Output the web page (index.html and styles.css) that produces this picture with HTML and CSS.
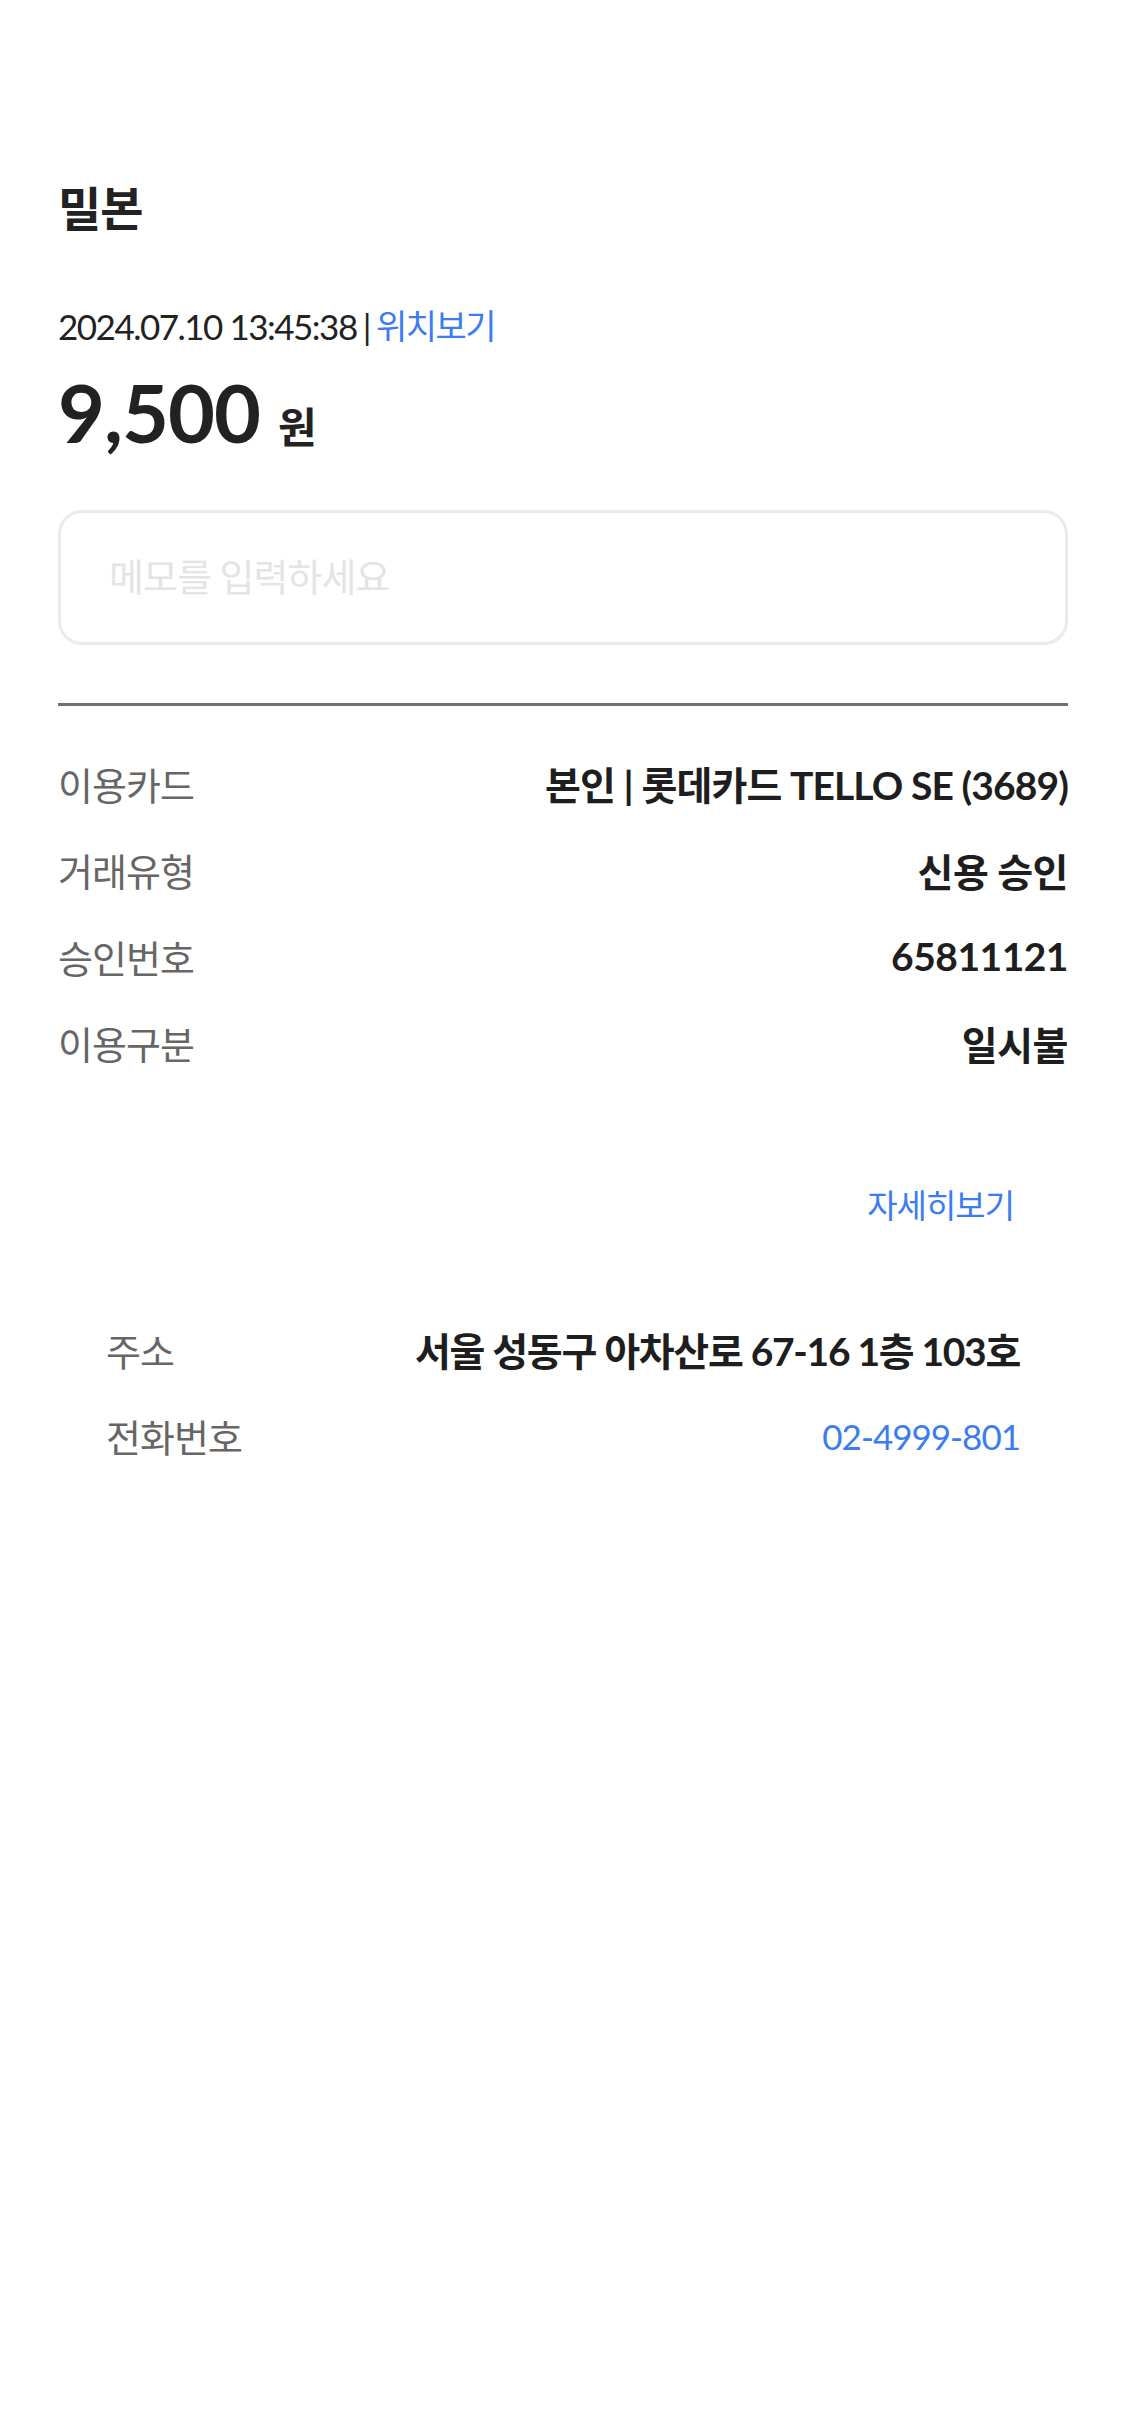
FILE: index.html
```html
<!DOCTYPE html>
<html lang="ko">
<head>
<meta charset="utf-8">
<title>밀본</title>
<link rel="stylesheet" href="styles.css">
</head>
<body>
<main class="page">
  <h1 class="title">밀본</h1>
  <div class="meta">
    <span class="datetime">2024.07.10 13:45:38</span>
    <span class="sep">|</span>
    <a class="link" href="#">위치보기</a>
  </div>
  <div class="amount">
    <span class="amount-num">9,500</span>
    <span class="amount-unit">원</span>
  </div>
  <div class="memo">
    <span class="memo-placeholder">메모를 입력하세요</span>
  </div>
  <hr class="divider">
  <dl class="info">
    <div class="row"><dt>이용카드</dt><dd class="card">본인 | 롯데카드 TELLO SE (3689)</dd></div>
    <div class="row"><dt>거래유형</dt><dd>신용 승인</dd></div>
    <div class="row"><dt>승인번호</dt><dd>65811121</dd></div>
    <div class="row"><dt>이용구분</dt><dd>일시불</dd></div>
  </dl>
  <div class="more-wrap">
    <a class="more" href="#">자세히보기</a>
  </div>
  <dl class="store">
    <div class="row"><dt>주소</dt><dd class="address">서울 성동구 아차산로 67-16 1층 103호</dd></div>
    <div class="row"><dt>전화번호</dt><dd class="phone">02-4999-801</dd></div>
  </dl>
</main>
</body>
</html>
```

FILE: styles.css
```css
* { box-sizing: border-box; }
html, body {
  margin: 0;
  padding: 0;
  background: #ffffff;
}
body {
  font-family: Lato, "Noto Sans CJK KR", sans-serif;
  color: #222222;
  width: 1125px;
  min-height: 2436px;
}
.page {
  padding: 180px 57px 0 58px;
}
.title {
  margin: 0;
  font-size: 47px;
  line-height: 56px;
  font-weight: 700;
  color: #222222;
  letter-spacing: -1px;
}
.meta {
  margin-top: 68px;
  display: flex;
  align-items: center;
  gap: 6px;
  font-size: 35px;
  line-height: 44px;
  letter-spacing: -1.5px;
}
.datetime { color: #222222; }
.sep { color: #222222; }
.link {
  color: #3b7cf0;
  text-decoration: none;
  font-size: 34px;
  letter-spacing: -1.5px;
}
.amount {
  margin-top: 16px;
  display: flex;
  align-items: baseline;
  gap: 18px;
  height: 96px;
}
.amount-num {
  font-size: 81px;
  line-height: 96px;
  font-weight: 700;
  color: #222222;
  letter-spacing: -1px;
}
.amount-unit {
  font-size: 42px;
  font-weight: 700;
  color: #222222;
}
.memo {
  margin-top: 50px;
  height: 135px;
  border: 3px solid #ebebeb;
  border-radius: 24px;
  display: flex;
  align-items: center;
  padding: 0 0 6px 48px;
}
.memo-placeholder {
  font-size: 38px;
  color: #e4e4e4;
  letter-spacing: -1px;
}
.divider {
  margin: 58px 0 0;
  border: 0;
  height: 3px;
  background: #707070;
}
.info {
  margin: 34px 0 0;
}
.row {
  display: flex;
  justify-content: space-between;
  align-items: center;
  height: 86.5px;
}
.row dt {
  font-size: 38px;
  color: #666666;
  letter-spacing: -1px;
}
.row dd {
  margin: 0;
  font-size: 39px;
  font-weight: 700;
  color: #1e1e1e;
  letter-spacing: -0.5px;
}
.row .card {
  letter-spacing: -0.9px;
}
.more-wrap {
  margin-top: 99px;
  display: flex;
  justify-content: flex-end;
  padding-right: 54px;
}
.more {
  font-size: 33px;
  line-height: 40px;
  color: #3b7cf0;
  text-decoration: none;
  letter-spacing: -1px;
}
.store {
  margin: 81px 0 0;
  padding: 0 48px;
}
.store .address {
  letter-spacing: -1.3px;
}
.store .phone {
  font-weight: 400;
  font-size: 35px;
  letter-spacing: -1px;
  color: #3b7cf0;
}
```
